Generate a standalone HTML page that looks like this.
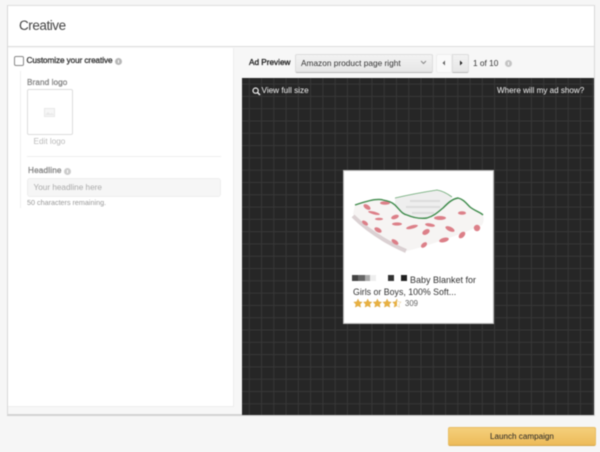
<!DOCTYPE html>
<html><head><meta charset="utf-8"><style>
*{box-sizing:border-box}
html,body{margin:0;padding:0}
body{width:600px;height:452px;overflow:hidden;background:#f6f6f6;font-family:"Liberation Sans",sans-serif;position:relative;color:#222}
.a{position:absolute;white-space:nowrap}
.blur{position:absolute;left:0;top:0;width:600px;height:452px;filter:blur(.45px)}
.i{position:absolute;width:7px;height:7px;border-radius:50%;background:#b8b8b8}
.i:after{content:"";position:absolute;left:3px;top:2px;width:1px;height:3px;background:#fff}
.m{-webkit-text-stroke:.3px currentColor}
.grid{background-color:#262626;background-image:linear-gradient(#373737 1px,transparent 1px),linear-gradient(90deg,#373737 1px,transparent 1px);background-size:12.27px 12.3px;background-position:6.8px 5.6px}
</style></head><body><div class="blur">
<div class="a" style="left:7px;top:5px;width:588px;height:411px;background:#f7f7f7;border:1px solid #d8d8d8;border-bottom:2px solid #d2d2d2;border-top-color:#ddd"></div>
<div class="a" style="left:8px;top:6px;width:586px;height:41px;background:#fff;border-bottom:1px solid #ddd"></div>
<div class="a" style="left:19px;top:17px;font-size:13.5px;line-height:18px;color:#444;letter-spacing:-.45px">Creative</div>
<div class="a" style="left:8px;top:48px;width:226px;height:359px;background:#fff;border-right:1px solid #eee;border-bottom:1px solid #eee"></div>
<div class="a" style="left:14px;top:56px;width:10px;height:10px;border:1px solid #8a8a8a;border-radius:2px;background:#fff"></div>
<div class="a m" style="left:26.5px;top:55px;font-size:8.2px;line-height:12px;color:#333;letter-spacing:-.01em">Customize your creative</div>
<div class="i" style="left:115px;top:58px"></div>
<div class="a" style="left:20px;top:71px;width:1px;height:137px;background:#f0f0f0"></div>
<div class="a m" style="left:27px;top:77px;font-size:8.2px;line-height:12px;color:#888;letter-spacing:.01em">Brand logo</div>
<div class="a" style="left:27px;top:89px;width:46px;height:46px;border:1px solid #ddd;border-radius:2px;background:#fff"></div>
<svg class="a" style="left:44px;top:108px" width="11" height="9" viewBox="0 0 11 9"><rect x=".5" y=".5" width="10" height="8" fill="#f6f6f6" stroke="#e8e8e8"/><path d="M1 7l3-3 2 2 2-1 2 2z" fill="#e8e8e8"/></svg>
<div class="a" style="left:33.5px;top:136px;font-size:8.2px;line-height:12px;color:#bbb">Edit logo</div>
<div class="a" style="left:27px;top:156px;width:194px;height:1px;background:#eee"></div>
<div class="a m" style="left:28px;top:165px;font-size:8.2px;line-height:12px;color:#888;letter-spacing:.02em">Headline</div>
<div class="i" style="left:64px;top:168px;background:#ccc"></div>
<div class="a" style="left:27px;top:178px;width:194px;height:19px;background:#f6f6f6;border:1px solid #eee;border-radius:3px"></div>
<div class="a" style="left:33.5px;top:181.5px;font-size:8.2px;line-height:12px;color:#aaa">Your headline here</div>
<div class="a" style="left:27px;top:197px;font-size:7.2px;line-height:12px;color:#999">50 characters remaining.</div>
<div class="a m" style="left:249px;top:57px;font-size:8.2px;line-height:12px;color:#222">Ad Preview</div>
<div class="a" style="left:295px;top:54px;width:138px;height:19px;background:linear-gradient(#f2f2f2,#e6e6e6);border:1px solid #ddd;border-bottom-color:#bbb;border-radius:2px"></div>
<div class="a" style="left:301px;top:57px;font-size:8.3px;line-height:12px;color:#333">Amazon product page right</div>
<svg class="a" style="left:420px;top:60px" width="7" height="5" viewBox="0 0 7 5"><path d="M1 1l2.5 2.5L6 1" fill="none" stroke="#888" stroke-width="1"/></svg>
<div class="a" style="left:436px;top:54px;width:16px;height:19px;background:#fafafa;border:1px solid #eee;border-radius:2px 0 0 2px"></div>
<div class="a" style="left:452px;top:54px;width:17px;height:19px;background:linear-gradient(#f2f2f2,#e6e6e6);border:1px solid #ddd;border-bottom-color:#bbb;border-radius:0 2px 2px 0"></div>
<svg class="a" style="left:442px;top:60px" width="4" height="6"><path d="M3 .5v5L.5 3z" fill="#666"/></svg>
<svg class="a" style="left:459px;top:60px" width="4" height="6"><path d="M1 .5v5L3.5 3z" fill="#222"/></svg>
<div class="a" style="left:473px;top:57px;font-size:8.3px;line-height:12px;color:#333">1 of 10</div>
<div class="i" style="left:505px;top:60px;background:#c4c4c4"></div>
<div class="a grid" style="left:242px;top:78px;width:352px;height:337px"></div>
<svg class="a" style="left:252px;top:87px" width="9" height="9" viewBox="0 0 9 9"><circle cx="3.6" cy="3.6" r="2.6" fill="none" stroke="#eee" stroke-width="1.2"/><path d="M5.5 5.500L8 8" stroke="#eee" stroke-width="1.5"/></svg>
<div class="a" style="left:261.5px;top:85px;font-size:8.2px;line-height:12px;color:#f2f2f2">View full size</div>
<div class="a" style="left:497px;top:85px;font-size:8.1px;line-height:12px;color:#f2f2f2">Where will my ad show?</div>
<div class="a" style="left:343px;top:170px;width:151px;height:154px;background:#fff;border:1px solid #bbb"></div>
<svg class="a" style="left:350px;top:185px" width="136" height="72" viewBox="0 0 136 72">
<path d="M3 29L5 20C14 17 26 13 33 15C38 16 42 17 45 20C50 25 52 29 57 30C64 33 70 34 77 33C84 31 88 27 93 23C98 18 102 14 108 13C113 14 116 18 120 22C125 26 130 27 133 30C134 34 134 37 132 40C110 50 80 60 57 66C40 58 18 44 3 29Z" fill="#f6f4f3"/>
<path d="M45 13C58 10 74 7 87 5C93 6 98 9 102 12C100 16 96 20 93 23C88 27 84 31 77 33C70 34 64 33 57 30C52 29 50 25 45 20Z" fill="#eeeeee"/>
<path d="M60 16h30M56 22h34M62 28h22" stroke="#dcdcdc" stroke-width="2" fill="none"/>
<path d="M3 31C18 46 38 58 56 66" fill="none" stroke="#cfc2c4" stroke-width="4" opacity=".75"/>
<g fill="#dc7f88">
<ellipse cx="17" cy="22" rx="4" ry="2.2" transform="rotate(35 17 22)"/>
<ellipse cx="35" cy="18" rx="5" ry="1.8"/>
<ellipse cx="45" cy="32" rx="4" ry="2" transform="rotate(-20 45 32)"/>
<ellipse cx="24" cy="28" rx="6" ry="1.4" transform="rotate(15 24 28)"/>
<ellipse cx="29" cy="34" rx="4" ry="1.3"/>
<ellipse cx="47" cy="39" rx="5" ry="1.6"/>
<ellipse cx="62" cy="42" rx="6" ry="1.7" transform="rotate(-15 62 42)"/>
<ellipse cx="80" cy="40" rx="5" ry="1.7" transform="rotate(10 80 40)"/>
<ellipse cx="100" cy="44" rx="5" ry="2.2" transform="rotate(25 100 44)"/>
<ellipse cx="112" cy="50" rx="4" ry="2.4" transform="rotate(-45 112 50)"/>
<ellipse cx="127" cy="43" rx="3.2" ry="3.2"/>
<ellipse cx="112" cy="28" rx="4" ry="1.8"/>
<ellipse cx="90" cy="33" rx="6" ry="2"/>
<ellipse cx="76" cy="47" rx="4" ry="2.5" transform="rotate(-30 76 47)"/>
<ellipse cx="94" cy="55" rx="5" ry="2.2" transform="rotate(-15 94 55)"/>
<ellipse cx="74" cy="60" rx="3.5" ry="2.2" transform="rotate(-40 74 60)"/>
<ellipse cx="28" cy="45" rx="4" ry="2.2" transform="rotate(30 28 45)"/>
<ellipse cx="45" cy="57" rx="4" ry="2" transform="rotate(35 45 57)"/>
<ellipse cx="15" cy="38" rx="3.5" ry="1.8" transform="rotate(35 15 38)"/>
</g>
<path d="M5 20C14 17 26 13 33 15C38 16 42 17 45 20C50 25 52 29 57 30C64 33 70 34 77 33C84 31 88 27 93 23C98 18 102 14 108 13C113 14 116 18 120 22C125 26 130 27 133 30" fill="none" stroke="#3d8a4a" stroke-width="1.4"/>
<path d="M45 13C58 10 74 7 87 5C93 6 98 9 102 12" fill="none" stroke="#6aa873" stroke-width=".8"/>
</svg>
<div class="a" style="left:352px;top:275px;width:6px;height:6px;background:#444"></div>
<div class="a" style="left:358px;top:275px;width:7px;height:6px;background:#666"></div>
<div class="a" style="left:365px;top:275px;width:5px;height:6px;background:#aaa"></div>
<div class="a" style="left:370px;top:275px;width:6px;height:6px;background:#eee"></div>
<div class="a" style="left:388px;top:275px;width:6px;height:6px;background:#333"></div>
<div class="a" style="left:401px;top:275px;width:6px;height:6px;background:#222"></div>
<div class="a" style="left:410px;top:273.5px;font-size:9px;line-height:12px;color:#333">Baby Blanket for</div>
<div class="a" style="left:353px;top:285.5px;font-size:8.8px;line-height:12px;color:#333">Girls or Boys, 100% Soft...</div>
<svg class="a" style="left:353px;top:298px" width="49" height="11" viewBox="0 0 49 11">
<defs><linearGradient id="h"><stop offset=".55" stop-color="#e8b040"/><stop offset=".55" stop-color="#fff"/></linearGradient></defs>
<g fill="#e8b040" stroke="#c98f1e" stroke-width=".25">
<path d="M5 1l1.300 2.700 3 .4-2.200 2.100.6 3L5 7.800 2.300 9.200l.6-3L.7 4.100l3-.4z"/>
<path transform="translate(9.700)" d="M5 1l1.300 2.700 3 .4-2.200 2.100.6 3L5 7.800 2.300 9.200l.6-3L.7 4.100l3-.4z"/>
<path transform="translate(19.400)" d="M5 1l1.300 2.700 3 .4-2.200 2.100.6 3L5 7.800 2.300 9.200l.6-3L.7 4.100l3-.4z"/>
<path transform="translate(29.100)" d="M5 1l1.300 2.700 3 .4-2.200 2.100.6 3L5 7.800 2.300 9.200l.6-3L.7 4.100l3-.4z"/>
<path transform="translate(38.800)" fill="url(#h)" d="M5 1l1.300 2.700 3 .4-2.200 2.100.6 3L5 7.800 2.300 9.200l.6-3L.7 4.100l3-.4z"/>
</g></svg>
<div class="a" style="left:405px;top:297.5px;font-size:7.8px;line-height:12px;color:#666">309</div>
<div class="a" style="left:448px;top:427px;width:148px;height:19px;background:linear-gradient(#f4cf7c,#edbb5a);border:1px solid #e8bd62;border-bottom-color:#d3a548;border-radius:2px"></div>
<div class="a" style="left:490px;top:430.5px;font-size:8.1px;line-height:12px;color:#222">Launch campaign</div>
</div></body></html>
